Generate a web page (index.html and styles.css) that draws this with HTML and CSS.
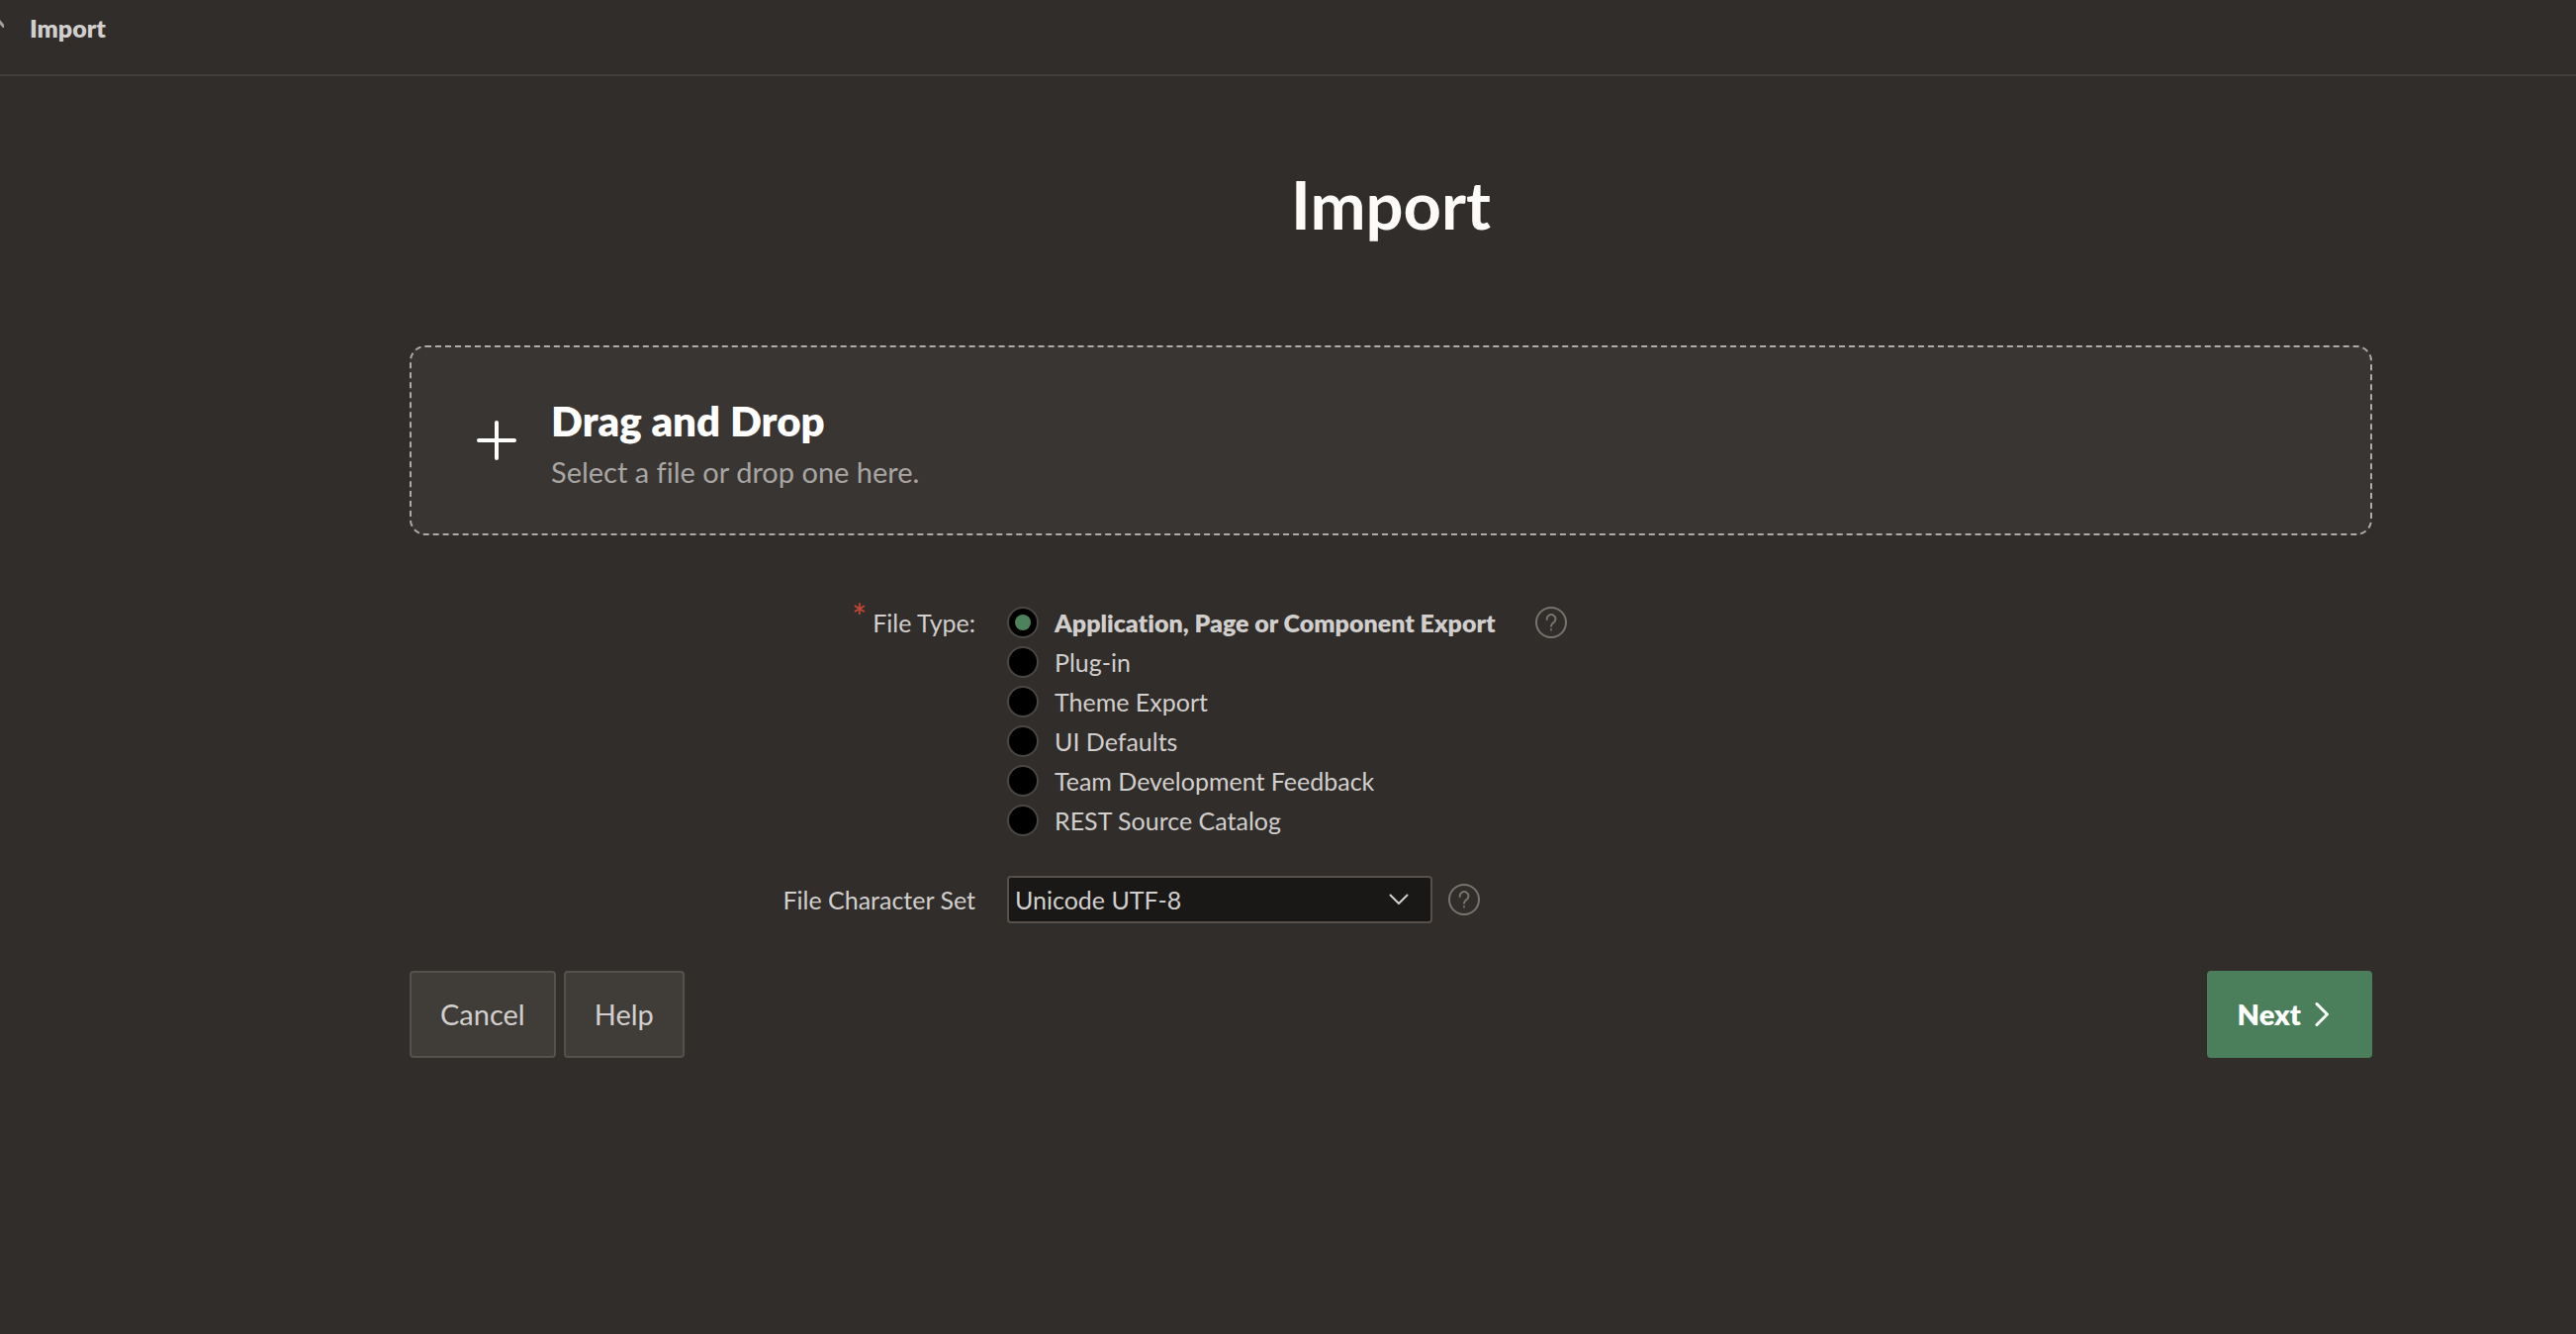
FILE: index.html
```html
<!DOCTYPE html>
<html lang="en">
<head>
<meta charset="utf-8">
<meta name="viewport" content="width=device-width, initial-scale=1">
<title>Import</title>
<link rel="stylesheet" href="styles.css">
</head>
<body>
<header class="topbar">
  <svg class="crumb-icon" width="4" height="8" viewBox="0 0 4 8" aria-hidden="true"><path d="M-2 0L4 7"/></svg>
  <nav aria-label="Breadcrumb"><span class="crumb" aria-current="page">Import</span></nav>
</header>
<main class="wizard">
  <h1 class="title">Import</h1>
  <button class="dropzone" type="button">
    <svg class="plus" width="40" height="40" viewBox="0 0 40 40" aria-hidden="true"><path d="M2 20H38M20 2V38"/></svg>
    <span class="drop-text">
      <span class="drop-heading">Drag and Drop</span>
      <span class="drop-hint">Select a file or drop one here.</span>
    </span>
  </button>
  <form class="form">
    <div class="field" role="radiogroup" aria-labelledby="file-type">
      <span class="label" id="file-type"><span class="required">*</span>File Type:</span>
      <div class="choices">
        <label class="choice"><input class="radio" type="radio" name="type" checked><span>Application, Page or Component Export</span></label>
        <label class="choice"><input class="radio" type="radio" name="type"><span>Plug-in</span></label>
        <label class="choice"><input class="radio" type="radio" name="type"><span>Theme Export</span></label>
        <label class="choice"><input class="radio" type="radio" name="type"><span>UI Defaults</span></label>
        <label class="choice"><input class="radio" type="radio" name="type"><span>Team Development Feedback</span></label>
        <label class="choice"><input class="radio" type="radio" name="type"><span>REST Source Catalog</span></label>
      </div>
      <button class="help help-wide" type="button" aria-label="Help: File Type">
        <svg width="32" height="32" viewBox="0 0 32 32" aria-hidden="true"><circle cx="16" cy="16" r="15"/><path d="M11.7 13v-.6a4.4 4.4 0 1 1 6.8 3.7c-1.6 1-2.5 1.7-2.5 3.7M16 23v.4"/></svg>
      </button>
    </div>
    <div class="field field-middle">
      <label class="label" for="charset">File Character Set</label>
      <div class="select-wrap">
        <select class="select" id="charset"><option>Unicode UTF-8</option></select>
        <svg class="select-arrow" width="20" height="12" viewBox="0 0 20 12" aria-hidden="true"><path d="M1.5 1.5L10 10L18.5 1.5"/></svg>
      </div>
      <button class="help" type="button" aria-label="Help: File Character Set">
        <svg width="32" height="32" viewBox="0 0 32 32" aria-hidden="true"><circle cx="16" cy="16" r="15"/><path d="M11.7 13v-.6a4.4 4.4 0 1 1 6.8 3.7c-1.6 1-2.5 1.7-2.5 3.7M16 23v.4"/></svg>
      </button>
    </div>
    <div class="actions">
      <button class="btn" type="button">Cancel</button>
      <button class="btn" type="button">Help</button>
      <button class="btn btn-primary" type="submit">Next
        <svg width="14" height="24" viewBox="0 0 14 24" aria-hidden="true"><path d="M2 1.5L12.5 12L2 22.5"/></svg>
      </button>
    </div>
  </form>
</main>
</body>
</html>
```
FILE: styles.css
```css
*,
*::before {
  box-sizing: border-box;
}

body {
  margin: 0;
  min-height: 100vh;
  background: #312d2a;
  color: #d1cfcd;
  font-family: Lato, "Open Sans", sans-serif;
  font-size: 25px;
  line-height: 40px;
  font-variant-ligatures: none;
}

button,
select,
input {
  font: inherit;
  color: inherit;
  margin: 0;
}

svg {
  display: block;
  flex: none;
  fill: none;
  stroke: currentColor;
  stroke-width: 2;
  stroke-linecap: round;
  stroke-linejoin: round;
}

.topbar {
  display: flex;
  align-items: flex-start;
  gap: 26px;
  height: 77px;
  padding-top: 8px;
  border-bottom: 2px solid #403c39;
}

.crumb-icon {
  margin-top: 12px;
  color: #a3a09d;
  stroke-width: 3;
}

.crumb {
  font-weight: 800;
}

.wizard {
  padding: 85px 206px 80px 414px;
}

.title {
  margin: 0 0 99px;
  text-align: center;
  color: #fcfbfa;
  font-size: 67px;
  font-weight: 700;
  line-height: 88px;
}

.dropzone {
  display: flex;
  align-items: center;
  gap: 35px;
  width: 100%;
  height: 192px;
  padding: 0 66px;
  border: 2px dashed #aeacaa;
  border-radius: 16px;
  background: #393532;
  text-align: left;
}

.plus {
  color: #fff;
  stroke-width: 4;
}

.drop-text {
  padding-top: 8px;
}

.drop-heading,
.drop-hint {
  display: block;
}

.drop-heading {
  color: #fff;
  font-size: 42px;
  font-weight: 800;
  line-height: 56px;
}

.drop-hint {
  color: #a8a5a3;
  font-size: 29px;
  line-height: 48px;
}

.form {
  padding-top: 68px;
}

.field {
  display: flex;
  align-items: flex-start;
}

.field-middle {
  align-items: center;
  margin-top: 36px;
}

.label {
  display: flex;
  flex: none;
  justify-content: flex-end;
  width: 604px;
  padding-right: 32px;
}

.required {
  margin-right: 6px;
  color: #c74634;
  font-size: 36px;
  line-height: 28px;
}

.choice {
  display: flex;
  align-items: center;
  gap: 16px;
}

.radio {
  appearance: none;
  flex: none;
  display: grid;
  place-items: center;
  width: 32px;
  height: 32px;
  border: 2px solid #4a4846;
  border-radius: 50%;
  background: #000;
}

.radio:checked::before {
  content: "";
  width: 16px;
  height: 16px;
  border-radius: 50%;
  background: #4c825c;
}

.radio:checked + span {
  font-weight: 800;
}

.help {
  margin-left: 16px;
  padding: 0;
  border: 0;
  background: none;
  color: #77736f;
}

.help-wide {
  margin: 4px 0 0 40px;
}

.select-wrap {
  display: grid;
  align-items: center;
  width: 430px;
}

.select {
  grid-area: 1 / 1;
  appearance: none;
  width: 100%;
  height: 48px;
  padding: 0 48px 0 6px;
  border: 2px solid #57504a;
  border-radius: 4px;
  background: #1a1816;
}

.select-arrow {
  grid-area: 1 / 1;
  justify-self: end;
  margin-right: 24px;
  pointer-events: none;
}

.actions {
  display: flex;
  gap: 8px;
  margin-top: 48px;
}

.btn {
  display: flex;
  align-items: center;
  gap: 16px;
  height: 88px;
  padding: 0 29px;
  border: 2px solid #55514d;
  border-radius: 4px;
  background: #403c38;
  font-size: 29px;
}

.btn-primary {
  gap: 14px;
  margin-left: auto;
  padding-right: 42px;
  border-color: #4b7f5b;
  background: #4b7f5b;
  color: #fff;
  font-weight: 800;
}

.btn-primary svg {
  stroke-width: 3;
}
```
